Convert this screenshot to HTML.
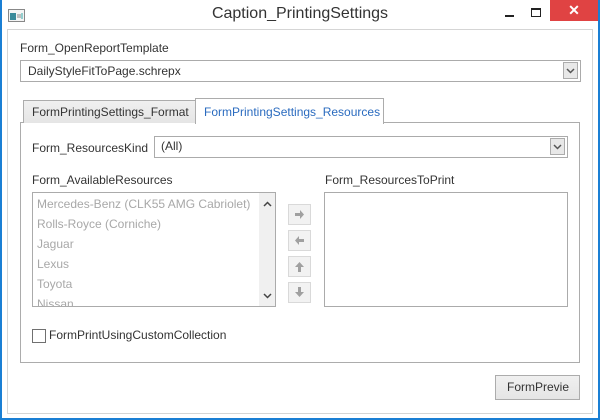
<!DOCTYPE html>
<html><head><style>
*{box-sizing:border-box;margin:0;padding:0}
body{width:600px;height:420px;overflow:hidden;background:#fff;font-family:"Segoe UI","Liberation Sans",sans-serif;font-size:12px;color:#333;position:relative}
.a{position:absolute}
.cont{left:7px;top:29px;width:586px;height:385px;border:1px solid #d5d5d5;background:#fff}
.box{border:1px solid #ababab;background:#fff}
.dd{width:15px;height:17px;border:1px solid #acacac;background:#e8e8e8;right:2px}
.lbl{font-size:12px;color:#333;white-space:nowrap}
.item{color:#a8a8a8;font-size:12px;left:4px}
.btn{width:23px;height:21px;border:1px solid #d9d9d9;background:#f2f2f2;left:288px}
</style></head><body>
<div class="a" style="left:0;top:0;width:2px;height:420px;background:#1a7fd4"></div>
<div class="a" style="left:598px;top:0;width:2px;height:420px;background:#1a7fd4"></div>
<div class="a" style="left:0;top:418px;width:600px;height:2px;background:#1a7fd4"></div>
<svg class="a" style="left:8px;top:9px" width="17" height="13"><rect x="0.5" y="0.5" width="16" height="12" fill="#f4f4f4" stroke="#888"/><rect x="2" y="4" width="6" height="7" fill="#3a8a9a"/><line x1="9" y1="6" x2="13" y2="6" stroke="#888"/><line x1="9" y1="8" x2="13" y2="8" stroke="#888"/><line x1="14" y1="4" x2="14" y2="10" stroke="#3aa"/></svg>
<div class="a lbl" style="left:0;width:600px;top:5px;text-align:center;font-size:16px;color:#333">Caption_PrintingSettings</div>
<div class="a" style="left:505px;top:15px;width:9px;height:2px;background:#222"></div>
<div class="a" style="left:531px;top:8px;width:10px;height:9px;border:1px solid #222;border-top-width:2px"></div>
<div class="a" style="left:550px;top:0;width:48px;height:21px;background:#e04343;color:#fff;text-align:center;font-size:14px;line-height:21px;font-weight:bold">✕</div>
<div class="a cont"></div>
<div class="a lbl" style="left:20px;top:41px">Form_OpenReportTemplate</div>
<div class="a box" style="left:20px;top:60px;width:561px;height:22px"><div class="a lbl" style="left:7px;top:3px">DailyStyleFitToPage.schrepx</div><div class="a dd" style="top:1px"><svg width="13" height="15"><path d="M3 6l3.5 3.5L10 6" fill="none" stroke="#555" stroke-width="1.5"/></svg></div></div>
<div class="a" style="left:20px;top:122px;width:560px;height:241px;border:1px solid #acacac"></div>
<div class="a" style="left:23px;top:100px;width:173px;height:23px;border:1px solid #acacac;border-bottom:none;background:linear-gradient(#f0f0f0,#e5e5e5)"><div class="a lbl" style="left:8px;top:4px">FormPrintingSettings_Format</div></div>
<div class="a" style="left:195px;top:98px;width:189px;height:26px;border:1px solid #acacac;border-bottom:none;background:#fff"><div class="a lbl" style="left:8px;top:6px;color:#2a6bbf">FormPrintingSettings_Resources</div></div>
<div class="a lbl" style="left:32px;top:141px">Form_ResourcesKind</div>
<div class="a box" style="left:154px;top:136px;width:414px;height:22px"><div class="a lbl" style="left:6px;top:2px">(All)</div><div class="a dd" style="top:1px"><svg width="13" height="15"><path d="M3 6l3.5 3.5L10 6" fill="none" stroke="#555" stroke-width="1.5"/></svg></div></div>
<div class="a lbl" style="left:32px;top:173px">Form_AvailableResources</div>
<div class="a box" style="left:32px;top:192px;width:244px;height:115px;overflow:hidden">
<div class="a item" style="top:4px">Mercedes-Benz (CLK55 AMG Cabriolet)</div>
<div class="a item" style="top:24px">Rolls-Royce (Corniche)</div>
<div class="a item" style="top:44px">Jaguar</div>
<div class="a item" style="top:64px">Lexus</div>
<div class="a item" style="top:84px">Toyota</div>
<div class="a item" style="top:104px">Nissan</div>
<div class="a" style="left:226px;top:0;width:17px;height:113px;background:#f0f0f0"></div>
<svg class="a" style="left:226px;top:6px" width="17" height="10"><path d="M5 7l3.5-3.5L12 7" fill="none" stroke="#444" stroke-width="1.5"/></svg>
<svg class="a" style="left:226px;top:98px" width="17" height="10"><path d="M5 3l3.5 3.5L12 3" fill="none" stroke="#444" stroke-width="1.5"/></svg>
</div>
<div class="a btn" style="top:204px"><svg width="21" height="19"><path d="M6 8h5V5l4 4.5-4 4.5v-3H6z" fill="#a0a0a0"/></svg></div>
<div class="a btn" style="top:230px"><svg width="21" height="19"><path d="M15 8h-5V5l-4 4.5 4 4.5v-3h5z" fill="#a0a0a0"/></svg></div>
<div class="a btn" style="top:256px"><svg width="21" height="19"><path d="M9 15v-5H6l4.5-5 4.5 5h-3v5z" fill="#a0a0a0"/></svg></div>
<div class="a btn" style="top:282px"><svg width="21" height="19"><path d="M9 4v5H6l4.5 5 4.5-5h-3V4z" fill="#a0a0a0"/></svg></div>
<div class="a lbl" style="left:325px;top:173px">Form_ResourcesToPrint</div>
<div class="a box" style="left:324px;top:192px;width:244px;height:115px"></div>
<div class="a" style="left:32px;top:329px;width:14px;height:14px;border:1px solid #707070;background:#fff"></div>
<div class="a lbl" style="left:49px;top:328px">FormPrintUsingCustomCollection</div>
<div class="a" style="left:495px;top:375px;width:85px;height:25px;border:1px solid #acacac;background:linear-gradient(#f0f0f0,#e5e5e5)"><div class="a" style="left:11px;top:4px;width:62px;overflow:hidden;white-space:nowrap;color:#333">FormPreview</div></div>
</body></html>
